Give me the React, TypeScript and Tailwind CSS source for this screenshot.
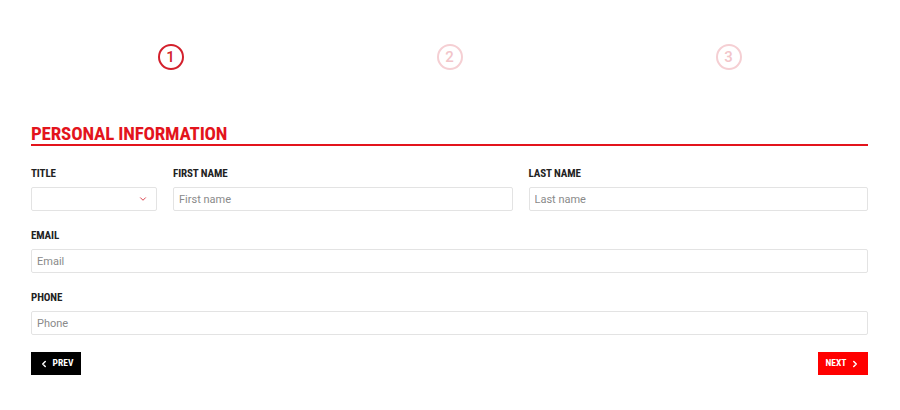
import { ChevronDown, ChevronLeft, ChevronRight } from "lucide-react";

const condensed = { fontFamily: "'Roboto Condensed', Roboto, 'Liberation Sans', sans-serif" };

function Step({ n, active = false }: { n: number; active?: boolean }) {
  return (
    <div className="flex justify-center">
      <div
        className={`flex h-[26px] w-[26px] items-center justify-center rounded-full border-2 text-[15px] font-medium ${
          active ? "border-[#d3202c] text-[#d3202c]" : "border-[#f5cfd3] text-[#f2c4c9]"
        }`}
      >
        {n}
      </div>
    </div>
  );
}

function Label({ children }: { children: string }) {
  return (
    <span className="block text-[11px] font-bold leading-4 tracking-[-0.01em] text-[#222]" style={condensed}>
      {children}
    </span>
  );
}

function TextInput({ placeholder }: { placeholder: string }) {
  return (
    <input
      type="text"
      placeholder={placeholder}
      className="mt-[5px] h-6 w-full rounded-[2px] border border-[#e3e3e3] bg-white px-[5px] text-[11px] text-[#333] outline-none placeholder:text-[#8a8a8a]"
    />
  );
}

export default function App() {
  return (
    <div className="h-[410px] w-[900px] bg-white" style={{ fontFamily: "Roboto, 'Liberation Sans', sans-serif" }}>
      <div className="mx-[31px] w-[837px] pt-[44px]">
        <div className="grid grid-cols-3">
          <Step n={1} active />
          <Step n={2} />
          <Step n={3} />
        </div>

        <h2
          className="mt-[53px] border-b-2 border-[#e3141c] text-[19px] font-bold leading-[21px] tracking-[-0.01em] text-[#e3141c]"
          style={condensed}
        >
          PERSONAL INFORMATION
        </h2>

        <div className="mt-[20px] grid grid-cols-[126px_1fr_1fr] gap-x-4">
          <label className="block">
            <Label>TITLE</Label>
            <div className="relative mt-[5px] h-6 w-full rounded-[2px] border border-[#e3e3e3] bg-white">
              <ChevronDown className="absolute right-[8px] top-[6px] h-[10px] w-[10px] text-[#d3202c]" strokeWidth={2} />
            </div>
          </label>
          <label className="block">
            <Label>FIRST NAME</Label>
            <TextInput placeholder="First name" />
          </label>
          <label className="block">
            <Label>LAST NAME</Label>
            <TextInput placeholder="Last name" />
          </label>
        </div>

        <label className="mt-[17px] block">
          <Label>EMAIL</Label>
          <TextInput placeholder="Email" />
        </label>

        <label className="mt-[17px] block">
          <Label>PHONE</Label>
          <TextInput placeholder="Phone" />
        </label>

        <div className="mt-[17px] flex items-center justify-between">
          <button
            type="button"
            className="flex h-[23px] w-[50px] items-center justify-center gap-[4px] bg-black text-[9.5px] font-bold text-white"
            style={condensed}
          >
            <ChevronLeft className="h-[10px] w-[10px]" strokeWidth={3.5} />
            PREV
          </button>
          <button
            type="button"
            className="flex h-[23px] w-[50px] items-center justify-center gap-[4px] bg-[#ff0000] text-[9.5px] font-bold text-white"
            style={condensed}
          >
            NEXT
            <ChevronRight className="h-[10px] w-[10px]" strokeWidth={3.5} />
          </button>
        </div>
      </div>
    </div>
  );
}
